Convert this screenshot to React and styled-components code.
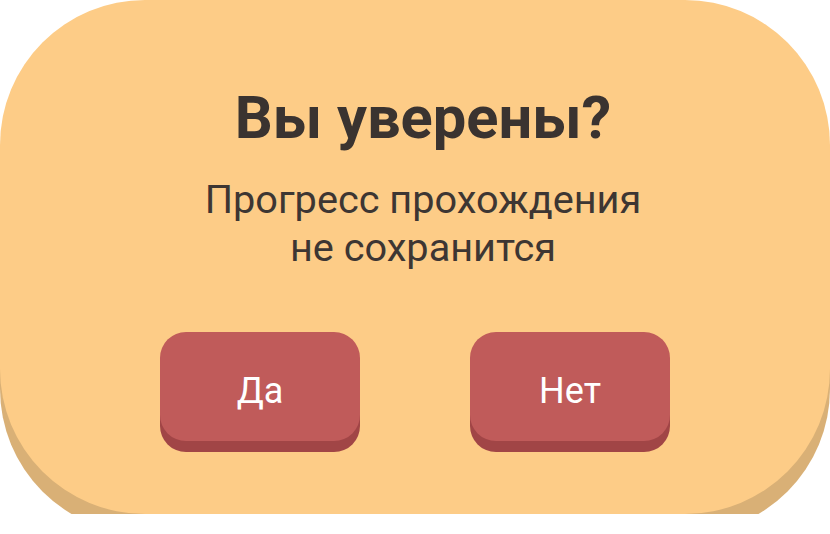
import React from 'react';
import styled, { createGlobalStyle } from 'styled-components';

const GlobalStyle = createGlobalStyle`
  html, body {
    margin: 0;
    padding: 0;
    background: #ffffff;
  }
  body {
    font-family: Roboto, "Liberation Sans", Arial, sans-serif;
  }
`;

const Card = styled.div`
  box-sizing: border-box;
  width: 830px;
  height: 514px;
  background: #fdcc87;
  border-radius: 145px;
  box-shadow: 0 20px 0 #d9b076;
  display: flex;
  flex-direction: column;
  align-items: center;
  padding-top: 88px;
`;

const Text = styled.div`
  display: flex;
  flex-direction: column;
  align-items: center;
  padding-left: 16px;
`;

const Title = styled.h1`
  margin: 0;
  font-size: 59.6px;
  line-height: 60px;
  font-weight: 700;
  color: #3a3330;
`;

const Message = styled.p`
  margin: 28px 0 0;
  font-size: 39.7px;
  line-height: 48px;
  font-weight: 400;
  color: #3d3633;
  text-align: center;
`;

const Actions = styled.div`
  display: flex;
  gap: 110px;
  margin-top: 60px;
`;

const Button = styled.button`
  box-sizing: border-box;
  width: 200px;
  height: 109px;
  border: none;
  border-radius: 26px;
  background: #c05b5a;
  box-shadow: 0 11px 0 #a14546;
  color: #ffffff;
  font-family: inherit;
  font-size: 36px;
  line-height: 36px;
  padding: 41px 0 0;
  display: flex;
  justify-content: center;
  align-items: flex-start;
  cursor: pointer;
`;

const App = () => {
  return (
    <>
      <GlobalStyle />
      <Card>
        <Text>
          <Title>Вы уверены?</Title>
          <Message>
            Прогресс прохождения
            <br />
            не сохранится
          </Message>
        </Text>
        <Actions>
          <Button>Да</Button>
          <Button>Нет</Button>
        </Actions>
      </Card>
    </>
  );
};

export default App;
